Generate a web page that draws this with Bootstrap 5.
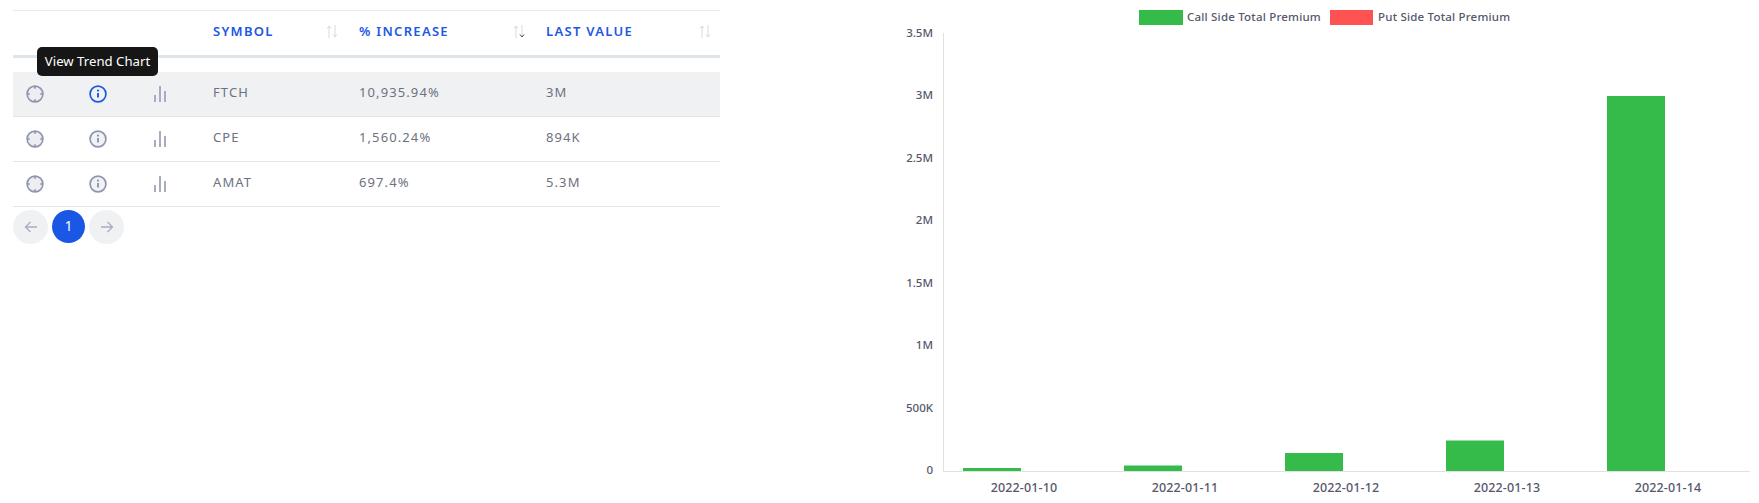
<!DOCTYPE html>
<html lang="en">
<head>
<meta charset="utf-8">
<title>Trend table</title>
<link rel="stylesheet" href="https://cdn.jsdelivr.net/npm/bootstrap@5.3.0/dist/css/bootstrap.min.css">
<style>
  body { background:#fff; font-family:"Noto Sans","Open Sans",sans-serif; overflow:hidden; }
  .page-wrap { height:503px; padding-top:10px; }
  .left-pane { width:707px; margin-left:13px; position:relative; flex:none; }
  .right-pane { width:879px; margin-left:auto; margin-top:-10px; flex:none; }
  .data-table { table-layout:fixed; width:707px; margin:0; border-collapse:separate; border-spacing:0; }
  .data-table th { height:48px; padding:0 9px 0 12px; border-top:1px solid #e4e9f2; border-bottom:3px solid #e0e5ea; font-size:13px; font-weight:600; letter-spacing:1.3px; color:#1d57e4; vertical-align:middle; background:#fff; box-shadow:none; }
  .data-table .spacer td { height:14px; padding:0; border:0; }
  .data-table td { height:45px; padding:0 12px 2px; border-bottom:1px solid #e0e5ec; font-size:13px; letter-spacing:1.1px; color:#6e7180; vertical-align:middle; background:#fff; box-shadow:none; }
  .data-table td.ico-cell { padding-bottom:0; }
  .data-table td.ico-first { padding-left:13px; }
  .data-table tr.row-active td { background:#f0f1f3; height:45px; }
  .head-inner { margin-top:-3px; }
  .ico { width:18px; height:18px; display:block; color:#8f93ad; }
  .ico-active { color:#1d57e4; }
  .sort-ico { width:12px; height:13px; display:block; flex:none; }
  .tip-box { position:absolute; left:24px; top:37px; width:121px; height:29px; background:#161616; color:#fff; font-size:13.2px; line-height:29px; text-align:center; border-radius:5px; }
  .pager { margin-top:3px; gap:4px; }
  .pg-dot { height:34px; width:35px; border-radius:50%; background:#f0f1f3; color:#a9acc0; border:0; padding:0; font-size:13.5px; }
  .pg-dot svg { width:16px; height:16px; display:block; margin:auto; }
  .pg-on { width:33px; height:33px; background:#1b57e5; color:#fff; }
  .chart-svg { display:block; }
  .chart-svg text { font-family:"Noto Sans","Open Sans",sans-serif; font-size:11.5px; fill:#55576b; font-weight:500; }
  .chart-svg .legend-text { letter-spacing:.2px; }
  .chart-svg .date-text { font-size:12.5px; letter-spacing:.15px; }
</style>
</head>
<body>
<svg width="0" height="0" class="position-absolute">
  <defs>
    <symbol id="i-target" viewBox="0 0 18 18"><circle cx="9" cy="9" r="7.9" fill="#eceef2" stroke="currentColor" stroke-width="1.6"/><path d="M9 1v2.8M9 14.2V17M1 9h2.8M14.2 9H17" stroke="currentColor" stroke-width="1.6"/></symbol>
    <symbol id="i-info" viewBox="0 0 18 18"><circle cx="9" cy="9" r="7.9" fill="#f1f2f5" stroke="currentColor" stroke-width="1.7"/><path d="M9 8v4.6" stroke="currentColor" stroke-width="1.9"/><circle cx="9" cy="5.6" r="1.1" fill="currentColor"/></symbol>
    <symbol id="i-bars" viewBox="0 0 18 18"><path d="M4 17v-7M9 17V1M14 17V6" stroke="#a9acc0" stroke-width="2" fill="none"/></symbol>
    <symbol id="i-sort" viewBox="0 0 12 13"><g fill="none" stroke="#d9dade" stroke-width="1"><path d="M3 13V1M1 3.5 3 1l2 2.5"/><path d="M9 0v12M7 9.5 9 12l2-2.5"/></g></symbol>
  </defs>
</svg>
<div class="page-wrap d-flex align-items-start">
  <div class="left-pane">
    <table class="table data-table">
      <colgroup><col style="width:64px"><col style="width:62px"><col style="width:62px"><col style="width:146px"><col style="width:187px"><col style="width:186px"></colgroup>
      <thead>
        <tr>
          <th></th><th></th><th></th>
          <th><div class="d-flex justify-content-between align-items-center head-inner"><span>SYMBOL</span><svg class="sort-ico"><use href="#i-sort"/></svg></div></th>
          <th><div class="d-flex justify-content-between align-items-center head-inner"><span>% INCREASE</span><svg class="sort-ico" viewBox="0 0 12 13"><use href="#i-sort"/><path d="M7 9.5 9 12l2-2.5" fill="none" stroke="#555"/></svg></div></th>
          <th><div class="d-flex justify-content-between align-items-center head-inner"><span>LAST VALUE</span><svg class="sort-ico"><use href="#i-sort"/></svg></div></th>
        </tr>
      </thead>
      <tbody>
        <tr class="spacer"><td colspan="6"></td></tr>
        <tr class="row-active">
          <td class="ico-cell ico-first"><svg class="ico"><use href="#i-target"/></svg></td>
          <td class="ico-cell"><svg class="ico ico-active"><use href="#i-info"/></svg></td>
          <td class="ico-cell"><svg class="ico"><use href="#i-bars"/></svg></td>
          <td>FTCH</td><td>10,935.94%</td><td>3M</td>
        </tr>
        <tr>
          <td class="ico-cell ico-first"><svg class="ico"><use href="#i-target"/></svg></td>
          <td class="ico-cell"><svg class="ico"><use href="#i-info"/></svg></td>
          <td class="ico-cell"><svg class="ico"><use href="#i-bars"/></svg></td>
          <td>CPE</td><td>1,560.24%</td><td>894K</td>
        </tr>
        <tr>
          <td class="ico-cell ico-first"><svg class="ico"><use href="#i-target"/></svg></td>
          <td class="ico-cell"><svg class="ico"><use href="#i-info"/></svg></td>
          <td class="ico-cell"><svg class="ico"><use href="#i-bars"/></svg></td>
          <td>AMAT</td><td>697.4%</td><td>5.3M</td>
        </tr>
      </tbody>
    </table>
    <div class="tip-box">View Trend Chart</div>
    <div class="d-flex pager">
      <button class="pg-dot" type="button" aria-label="Previous"><svg viewBox="0 0 16 16" fill="none" stroke="currentColor" stroke-width="1.3"><path d="M14 8H2.5M7.5 3 2.5 8l5 5"/></svg></button>
      <button class="pg-dot pg-on" type="button">1</button>
      <button class="pg-dot" type="button" aria-label="Next"><svg viewBox="0 0 16 16" fill="none" stroke="currentColor" stroke-width="1.3"><path d="M2 8h11.5M8.5 3l5 5-5 5"/></svg></button>
    </div>
  </div>
  <div class="right-pane">
    <svg class="chart-svg" width="879" height="503" viewBox="880 0 879 503" xmlns="http://www.w3.org/2000/svg">
      <rect x="1139" y="10" width="44" height="15" fill="#35bb4a"/>
      <text class="legend-text" x="1187" y="21">Call Side Total Premium</text>
      <rect x="1330" y="10" width="43" height="15" fill="#ff5252"/>
      <text class="legend-text" x="1378" y="21">Put Side Total Premium</text>
      <g text-anchor="end">
        <text x="933" y="37">3.5M</text>
        <text x="933" y="99">3M</text>
        <text x="933" y="162">2.5M</text>
        <text x="933" y="224">2M</text>
        <text x="933" y="287">1.5M</text>
        <text x="933" y="349">1M</text>
        <text x="933" y="412">500K</text>
        <text x="933" y="474">0</text>
      </g>
      <path d="M943.5 33V471.5H1750" fill="none" stroke="#e1e1e1" stroke-width="1"/>
      <g fill="#35bb4a">
        <rect x="963" y="468" width="58" height="3"/>
        <rect x="1124" y="465.5" width="58" height="5.5"/>
        <rect x="1285" y="453" width="58" height="18"/>
        <rect x="1446" y="440.5" width="58" height="30.5"/>
        <rect x="1607" y="96" width="58" height="375"/>
      </g>
      <g text-anchor="middle">
        <text class="date-text" x="1024" y="492">2022-01-10</text>
        <text class="date-text" x="1185" y="492">2022-01-11</text>
        <text class="date-text" x="1346" y="492">2022-01-12</text>
        <text class="date-text" x="1507" y="492">2022-01-13</text>
        <text class="date-text" x="1668" y="492">2022-01-14</text>
      </g>
    </svg>
  </div>
</div>
<script src="https://cdn.jsdelivr.net/npm/bootstrap@5.3.0/dist/js/bootstrap.bundle.min.js"></script>
</body>
</html>
